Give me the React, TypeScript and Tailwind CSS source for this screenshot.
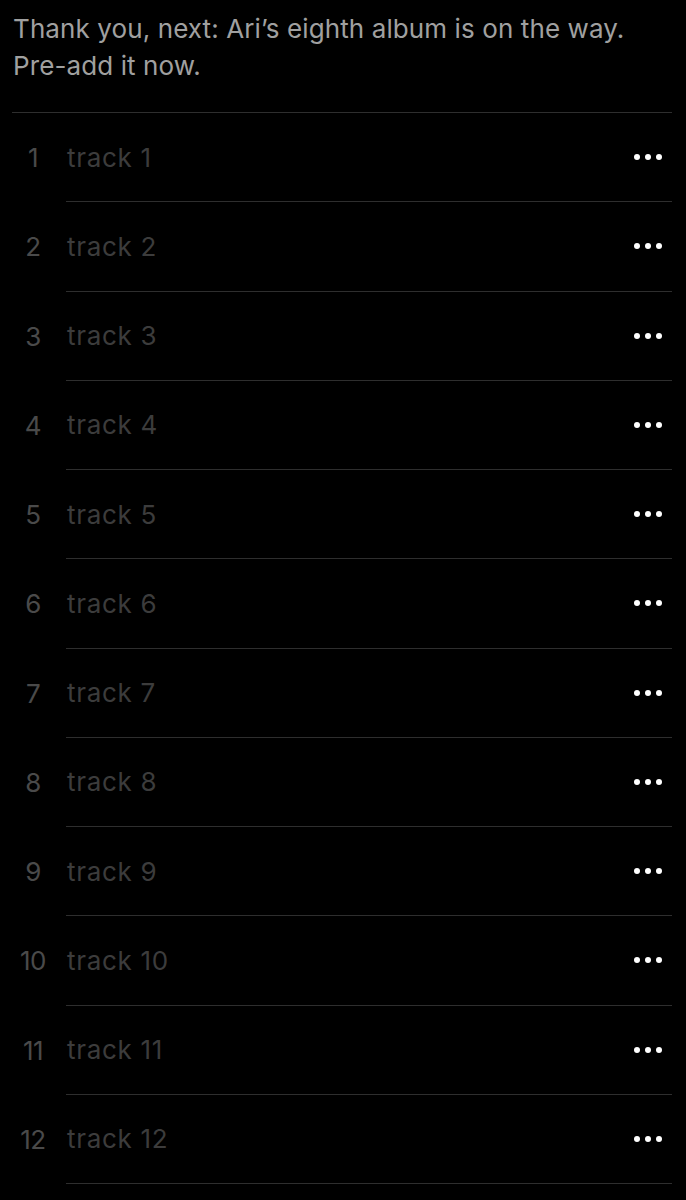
import React from 'react';

const tracks = Array.from({ length: 12 }, (_, i) => i + 1);

const MoreDots: React.FC = () => (
  <div className="flex items-center gap-[5px]">
    <span className="w-[6px] h-[6px] rounded-full bg-white" />
    <span className="w-[6px] h-[6px] rounded-full bg-white" />
    <span className="w-[6px] h-[6px] rounded-full bg-white" />
  </div>
);

export default function App() {
  return (
    <div
      className="w-[686px] h-[1200px] bg-black overflow-hidden pl-[12px] pr-[14px]"
      style={{ fontFamily: 'Inter, "Noto Sans", sans-serif' }}
    >
      {/* Header note */}
      <div className="pl-[1px] pt-[10px] h-[113px] border-b border-[#2e2e2e]">
        <p className="text-[26px] leading-[37px] text-[#a0a0a0] tracking-[0.1px]">
          Thank you, next: Ari’s eighth album is on the way.
          <br />
          Pre-add it now.
        </p>
      </div>

      {/* Track list */}
      {tracks.map((n) => (
        <div key={n} className="flex h-[89.25px]">
          <div className="w-[42px] mr-[12px] flex items-center justify-center text-[26px] text-[#4a4a4a] tracking-[-0.5px]">
            {n}
          </div>
          <div className="flex-1 flex items-center justify-between border-b border-[#2e2e2e] pl-[1px] pr-[10px]">
            <span className="text-[26px] text-[#3c3c3c] tracking-[0.7px]">track {n}</span>
            <MoreDots />
          </div>
        </div>
      ))}
    </div>
  );
}
